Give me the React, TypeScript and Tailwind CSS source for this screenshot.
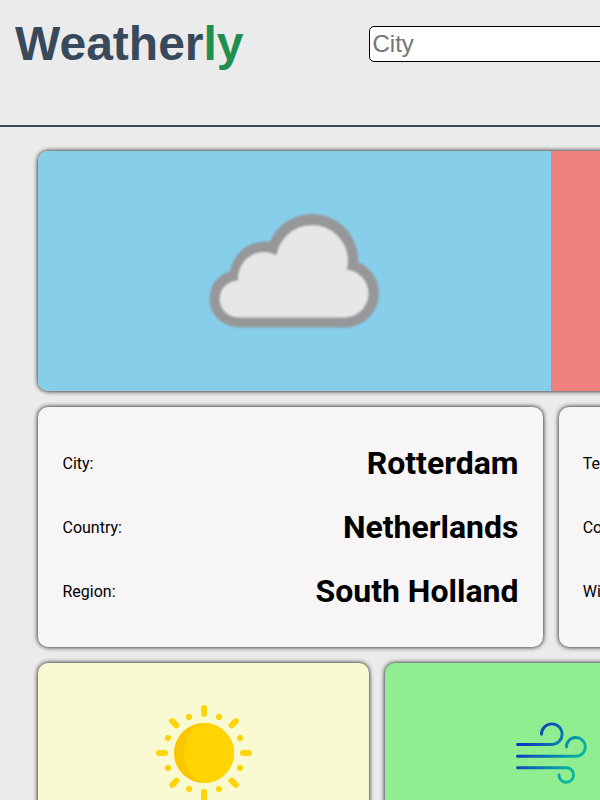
import React from "react";

const card = "shrink-0 rounded-[10px] shadow-[0_0_5px_#000]";

function Cloud() {
  return (
    <svg className="h-[130px] w-[190px] blur-[0.8px]" viewBox="200 205 190 130">
      <g fill="#969798">
        <circle cx="238" cy="297.500" r="28.500" />
        <circle cx="265" cy="276" r="35.500" />
        <circle cx="312" cy="259" r="46" />
        <circle cx="345" cy="292.500" r="34" />
        <rect x="238" y="270" width="107" height="56.500" />
      </g>
      <g fill="#e6e7e9">
        <circle cx="238" cy="298" r="18.500" />
        <circle cx="264" cy="277" r="26" />
        <circle cx="312" cy="260" r="36" />
        <circle cx="344.500" cy="292.500" r="24" />
        <path d="M238 280L274 254L347 270V316.500H238Z" />
      </g>
    </svg>
  );
}

const angles = [0, 45, 90, 135, 180, 225, 270, 315];

function Sun() {
  return (
    <svg className="h-24 w-24" viewBox="0 0 96 96">
      <circle cx="48" cy="48" r="30" fill="#fac600" />
      <path d="M48 18a30 30 0 0 1 0 60c-11-3-20-15-20-30s9-27 20-30Z" fill="#ffd400" />
      <g fill="#ffd40a">
        {angles.map((a) => (
          <rect key={a} x="45" y="0" width="6" height="12" rx="3" transform={`rotate(${a} 48 48)`} />
        ))}
        {angles.map((a) => (
          <circle key={a} cx="48" cy="9" r="3.100" transform={`rotate(${a + 22.5} 48 48)`} />
        ))}
      </g>
    </svg>
  );
}

function Wind() {
  return (
    <svg className="h-[72px] w-[72px]" viewBox="515 717 72 72" fill="none" stroke="url(#wind)" strokeWidth="2.900" strokeLinecap="round">
      <defs>
        <linearGradient id="wind" gradientUnits="userSpaceOnUse" x1="529" y1="736" x2="572" y2="767">
          <stop offset="0" stopColor="#0b36c4" />
          <stop offset="1" stopColor="#08b6a0" />
        </linearGradient>
      </defs>
      <path d="M517.500 744.500H552A10.300 10.300 0 1 0 541.500 734.300" />
      <path d="M517.500 756.300H576A9.400 9.400 0 1 0 566.500 747" />
      <path d="M517.500 767.700H566A7.300 7.300 0 1 1 559 775" />
    </svg>
  );
}

function Row({ label, value }: { label: string; value: string }) {
  return (
    <div className="flex h-16 items-center justify-between">
      <span className="pt-px text-base">{label}</span>
      <span className="text-[32px] leading-none font-bold">{value}</span>
    </div>
  );
}

export default function App() {
  return (
    <div className="h-[800px] w-[600px] overflow-hidden bg-[#ebebeb] font-['Roboto',sans-serif] text-black">
      <header className="flex h-[127px] items-start border-b-2 border-[#3c4856] font-['Liberation_Sans',Arial,sans-serif]">
        <h1 className="ml-[15px] mt-4 w-[354px] shrink-0 text-[48px] leading-[55px] font-bold text-[#37495a]">
          Weather<span className="text-[#1e8f4e]">ly</span>
        </h1>
        <input
          className="mt-[26px] h-9 w-[400px] shrink-0 rounded-[5px] border border-black bg-white px-[2.5px] text-2xl placeholder:text-[#757575]"
          placeholder="City"
        />
      </header>
      <main className="flex w-[1102px] flex-col gap-4 px-[38px] pt-6">
        <section className={`${card} flex h-60 overflow-hidden`}>
          <div className="flex w-1/2 items-center justify-center bg-[#87ceeb]">
            <Cloud />
          </div>
          <div className="w-1/2 bg-[#f08080]" />
        </section>
        <section className="flex gap-4">
          <div className={`${card} flex h-60 w-[505px] flex-col justify-center bg-[#f7f5f6] pl-[24.5px] pr-[24.5px]`}>
            <Row label="City:" value="Rotterdam" />
            <Row label="Country:" value="Netherlands" />
            <Row label="Region:" value="South Holland" />
          </div>
          <div className={`${card} flex h-60 w-[505px] flex-col justify-center bg-[#f7f5f6] pl-[23.7px] pr-[25px]`}>
            <Row label="Temperature:" value="" />
            <Row label="Condition:" value="" />
            <Row label="Wind:" value="" />
          </div>
        </section>
        <section className="grid grid-cols-3 gap-4">
          <div className={`${card} flex h-60 justify-center bg-[#fafad2] pt-[42px]`}>
            <Sun />
          </div>
          <div className={`${card} flex h-60 justify-center bg-[#90ee90] pt-[54px]`}>
            <Wind />
          </div>
          <div className={`${card} h-60 bg-[#f7f5f6]`} />
        </section>
      </main>
    </div>
  );
}
